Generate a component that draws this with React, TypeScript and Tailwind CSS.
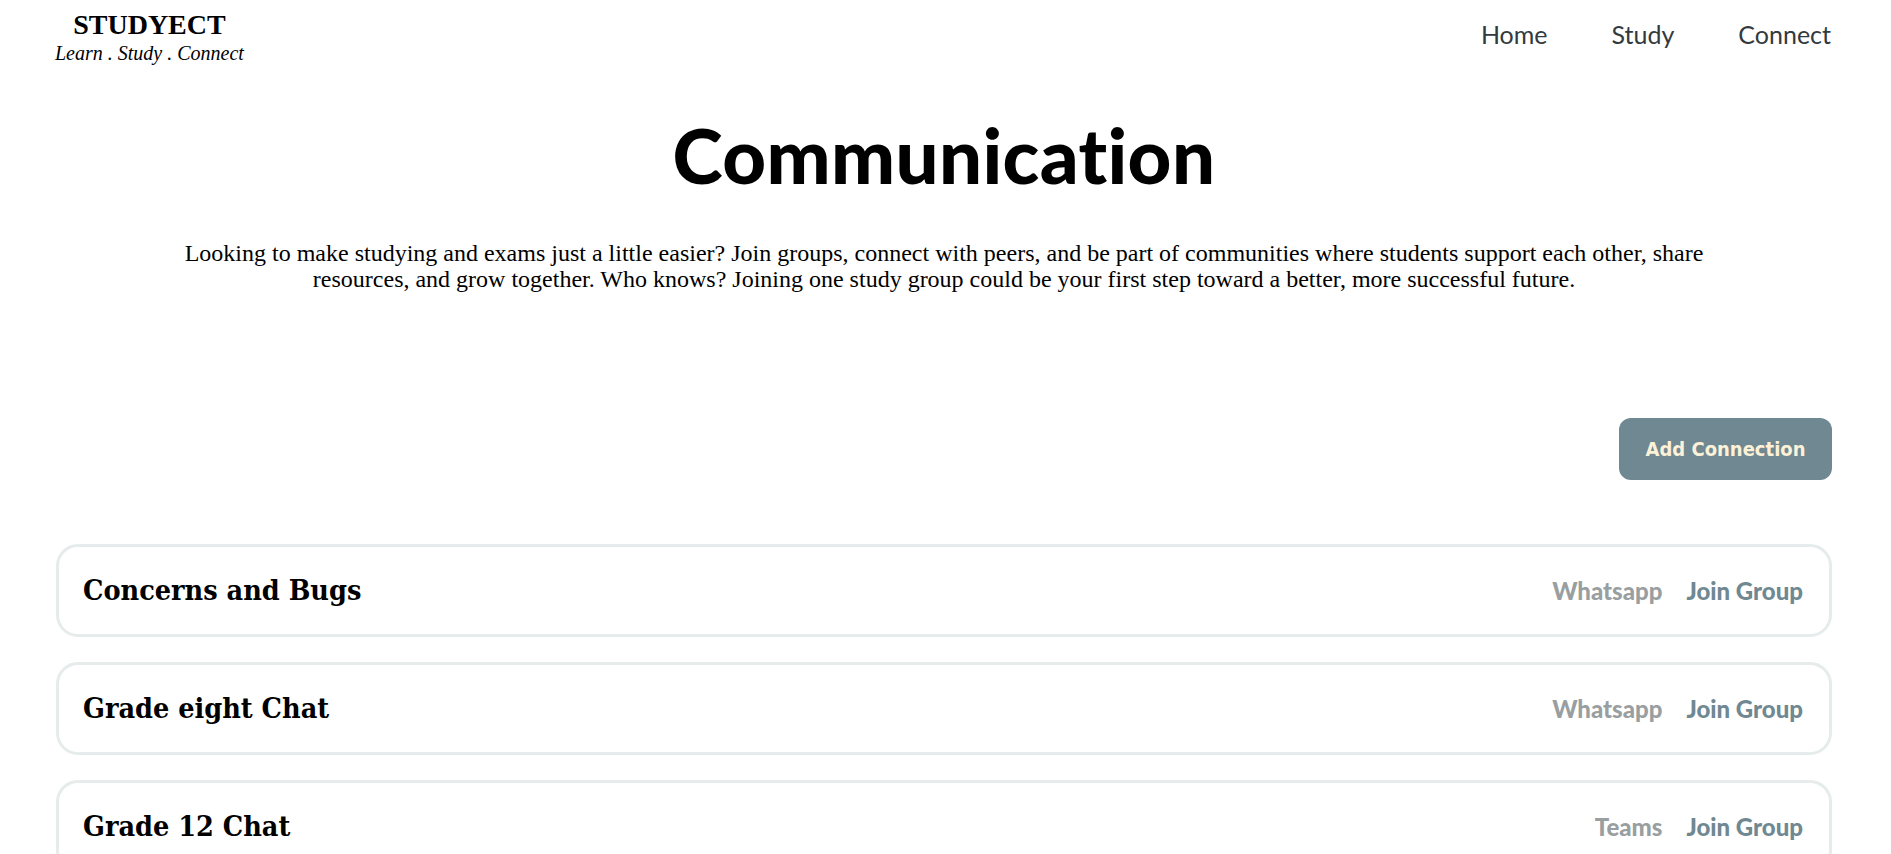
import React from "react";

const groups = [
  { name: "Concerns and Bugs", platform: "Whatsapp" },
  { name: "Grade eight Chat", platform: "Whatsapp" },
  { name: "Grade 12 Chat", platform: "Teams" },
];

export default function App() {
  return (
    <div className="min-h-screen bg-white text-black">
      <header className="flex items-start justify-between pl-[55px] pr-[60px]">
        <div className="pt-[11px] text-center font-['Liberation_Serif',serif]">
          <div className="text-[28px] leading-[28px] font-bold">STUDYECT</div>
          <div className="mt-[4px] text-[20px] leading-[20px] italic">Learn . Study . Connect</div>
        </div>
        <nav className="flex gap-[64px] pt-[22px] font-['Lato',sans-serif] text-[25px] leading-[25px] text-[#333a3d]">
          <a>Home</a>
          <a>Study</a>
          <a>Connect</a>
        </nav>
      </header>

      <main className="pl-[56px] pr-[59px]">
        <h1 className="mt-[54px] text-center font-['Lato',sans-serif] text-[76px] leading-[76px] font-black tracking-[0.005em]">
          Communication
        </h1>
        <p className="mx-auto mt-[47px] w-[1560px] text-center font-['Liberation_Serif',serif] text-[24px] leading-[26px]">
          Looking to make studying and exams just a little easier? Join groups, connect with peers, and be part of
          communities where students support each other, share resources, and grow together. Who knows? Joining one
          study group could be your first step toward a better, more successful future.
        </p>

        <div className="mt-[126px] flex justify-end">
          <button className="h-[62px] w-[213px] rounded-[12px] bg-[#6f8891] font-['DejaVu_Sans_Condensed','DejaVu_Sans',sans-serif] font-stretch-condensed text-[20px] font-bold text-[#fdf1d8]">
            Add Connection
          </button>
        </div>

        <div className="mt-[64px] flex flex-col gap-[25px]">
          {groups.map((g) => (
            <div
              key={g.name}
              className="flex h-[93px] items-center justify-between rounded-[22px] border-[3px] border-[#e6ebeb] pl-[24px] pr-[26px]"
            >
              <div className="font-['DejaVu_Serif_Condensed','DejaVu_Serif',serif] font-stretch-condensed text-[28.5px] font-bold">
                {g.name}
              </div>
              <div className="flex gap-[24px] font-['Lato',sans-serif] text-[24px] font-black">
                <span className="text-[#999fa1]">{g.platform}</span>
                <span className="text-[#6f8891]">Join Group</span>
              </div>
            </div>
          ))}
        </div>
      </main>
    </div>
  );
}
